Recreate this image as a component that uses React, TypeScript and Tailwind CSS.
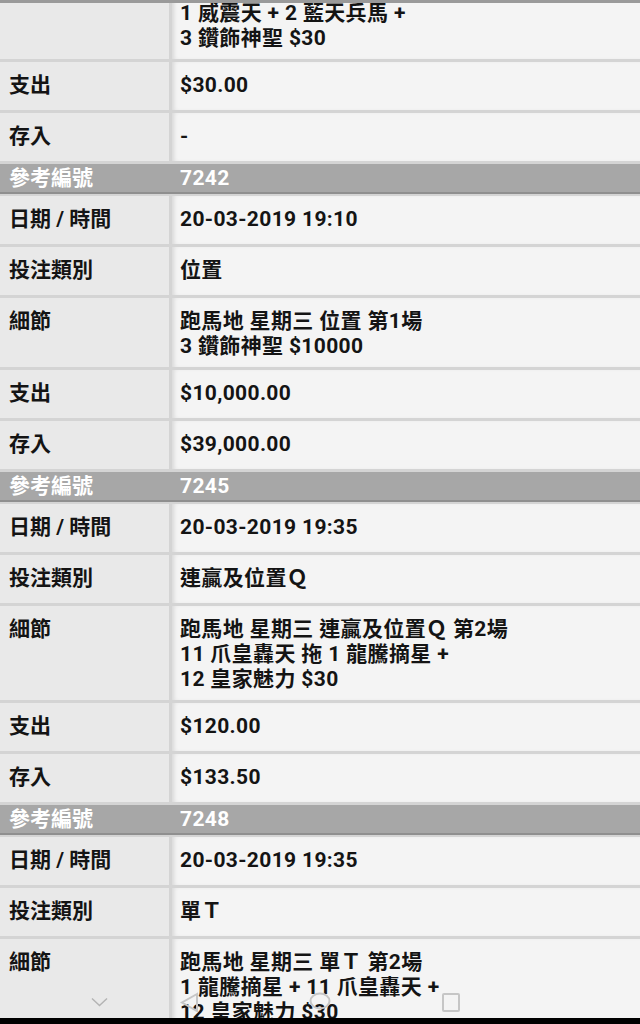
import React from "react";

const font = { fontFamily: "Roboto, 'Noto Sans CJK TC', sans-serif" };

type Row = { label: string; lines: string[] };

function DataRow({ label, lines }: Row) {
  return (
    <div className="grid grid-cols-[169px_1fr] gap-x-[3px] mb-[3px]">
      <div className="bg-[#e9e9e9] pl-[9px] pt-[11px] pb-[8px] min-h-[48px] leading-[25px]">{label}</div>
      <div className="bg-[#f4f4f4] pl-[8px] pt-[11px] pb-[8px] min-h-[48px] leading-[25px] tracking-[0.35px] shadow-[inset_4px_0_4px_-2px_rgba(0,0,0,0.12)]">
        {lines.map((l, i) => (
          <div key={i} className="whitespace-pre">{l}</div>
        ))}
      </div>
    </div>
  );
}

function Header({ num }: { num: string }) {
  return (
    <div className="grid grid-cols-[172px_1fr] h-[30px] items-center bg-[#a7a7a7] border-b-2 border-[#8f8f8f] text-white mb-[2px]">
      <div className="pl-[9px] leading-[28px]">參考編號</div>
      <div className="pl-[8px] leading-[28px] tracking-[0.35px]">{num}</div>
    </div>
  );
}

type Rec = { num: string; date: string; type: string; details: string[]; out: string; inn: string };

const recs: Rec[] = [
  {
    num: "7242",
    date: "20-03-2019 19:10",
    type: "位置",
    details: ["跑馬地 星期三 位置 第1場", "3 鑽飾神聖 $10000"],
    out: "$10,000.00",
    inn: "$39,000.00",
  },
  {
    num: "7245",
    date: "20-03-2019 19:35",
    type: "連贏及位置Ｑ",
    details: ["跑馬地 星期三 連贏及位置Ｑ 第2場", "11 爪皇轟天 拖 1 龍騰摘星 +", "12 皇家魅力 $30"],
    out: "$120.00",
    inn: "$133.50",
  },
  {
    num: "7248",
    date: "20-03-2019 19:35",
    type: "單Ｔ",
    details: ["跑馬地 星期三 單Ｔ 第2場", "1 龍騰摘星 + 11 爪皇轟天 +", "12 皇家魅力 $30"],
    out: "$30.00",
    inn: "-",
  },
];

export default function App() {
  return (
    <div className="h-[1024px] w-[640px] overflow-hidden flex flex-col bg-[#d4d4d4] text-[21px] font-bold text-[#141414] relative" style={font}>
      <div className="h-[3px] bg-[#9a9a9a] shrink-0" />
      <div className="flex-1 overflow-hidden">
        <div className="mt-[-38px]">
          <DataRow label="" lines={["跑馬地 星期三 三Ｔ 第1場", "1 威震天 + 2 藍天兵馬 +", "3 鑽飾神聖 $30"]} />
        </div>
        <DataRow label="支出" lines={["$30.00"]} />
        <DataRow label="存入" lines={["-"]} />
        {recs.map((r) => (
          <div key={r.num}>
            <Header num={r.num} />
            <DataRow label="日期 / 時間" lines={[r.date]} />
            <DataRow label="投注類別" lines={[r.type]} />
            <DataRow label="細節" lines={r.details} />
            <DataRow label="支出" lines={[r.out]} />
            <DataRow label="存入" lines={[r.inn]} />
          </div>
        ))}
      </div>
      <div className="h-[6px] bg-black shrink-0" />
      {/* navigation overlay */}
      <div className="absolute left-0 right-0 bottom-[6px] h-[30px] pointer-events-none">
        <svg className="absolute left-[91px] top-[9px]" width="17" height="10" viewBox="0 0 17 10" fill="none" stroke="#b4b4b4" strokeWidth="1.5">
          <path d="M1 1.5 L8.5 8.5 L16 1.5" />
        </svg>
        <svg className="absolute left-[179px] top-[4px]" width="20" height="21" viewBox="0 0 20 21" fill="none" stroke="#c6c6c6" strokeWidth="2">
          <path d="M18 2 L3 10.5 L18 19 Z" />
        </svg>
        <svg className="absolute left-[309px] top-[4px]" width="22" height="18" viewBox="0 0 22 18" fill="none" stroke="#c6c6c6" strokeWidth="2">
          <ellipse cx="11" cy="9" rx="9.5" ry="7.5" />
        </svg>
        <svg className="absolute left-[441px] top-[4px]" width="20" height="21" viewBox="0 0 20 21" fill="none" stroke="#c6c6c6" strokeWidth="2">
          <rect x="2" y="2" width="16" height="17" rx="1" />
        </svg>
      </div>
    </div>
  );
}
